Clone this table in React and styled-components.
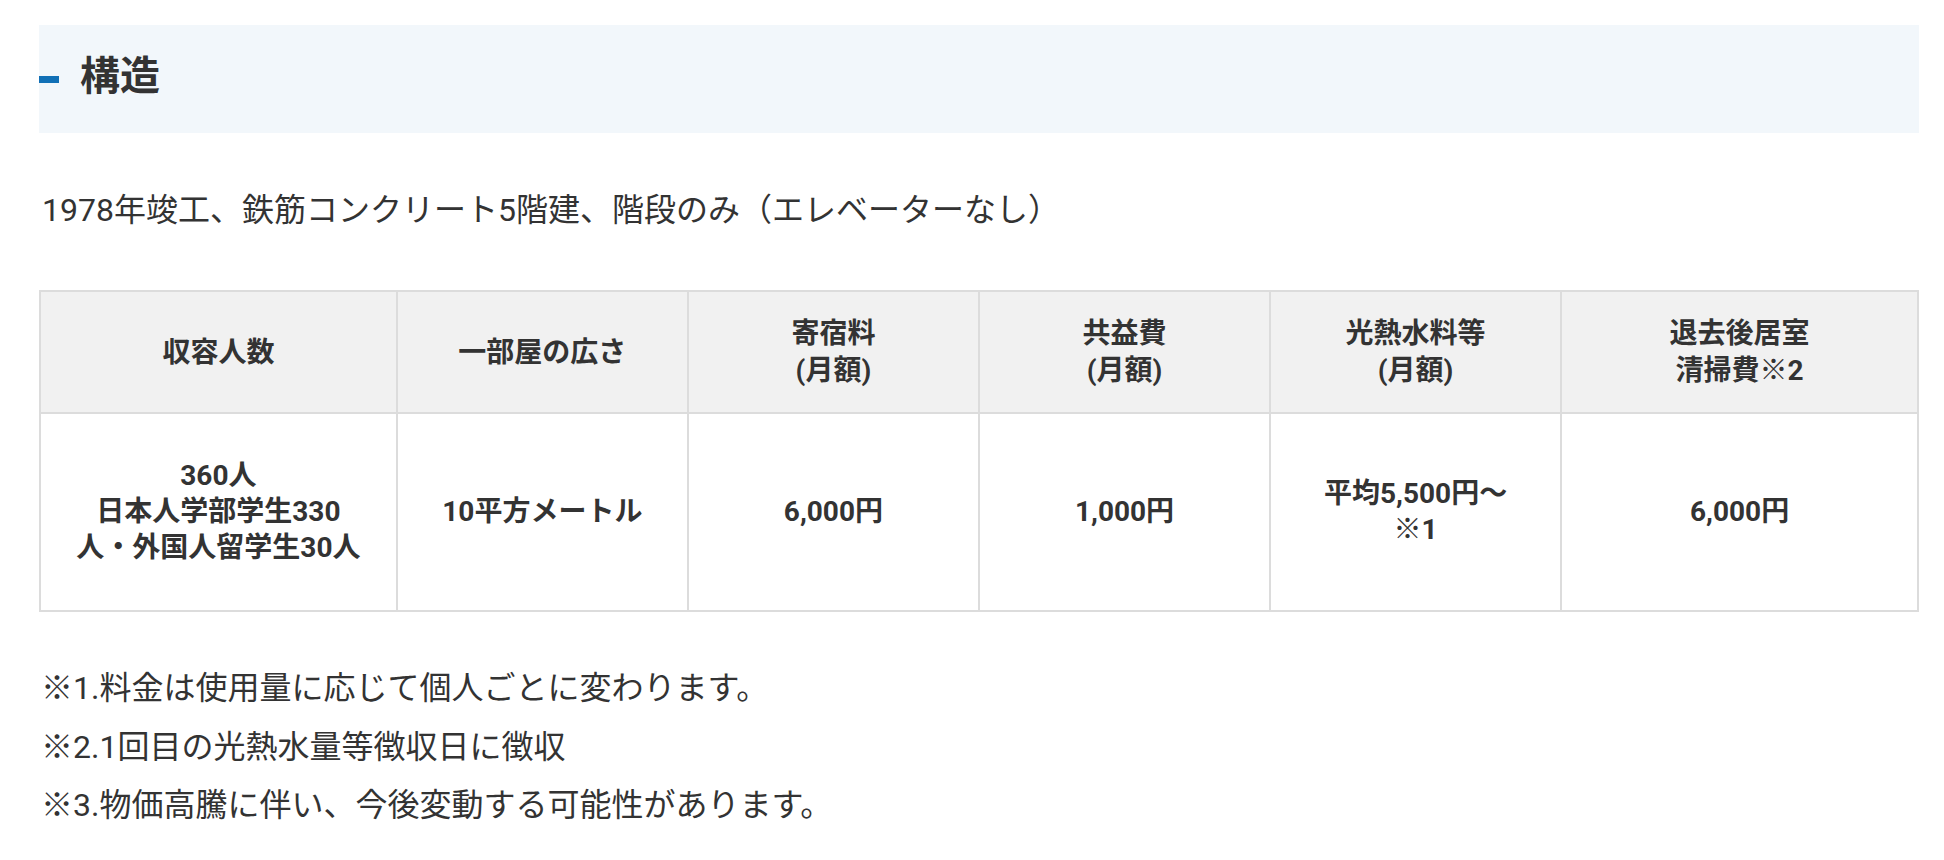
import React from 'react'
import styled, { createGlobalStyle } from 'styled-components'

const GlobalStyle = createGlobalStyle`
  body {
    margin: 0;
    background: #fff;
    color: #333;
    font-family: Roboto, "Noto Sans CJK JP", sans-serif;
  }
`

const columns = [
  { label: ['収容人数'], value: ['360人', '日本人学部学生330', '人・外国人留学生30人'], wide: true },
  { label: ['一部屋の広さ'], value: ['10平方メートル'] },
  { label: ['寄宿料', '(月額)'], value: ['6,000円'] },
  { label: ['共益費', '(月額)'], value: ['1,000円'] },
  { label: ['光熱水料等', '(月額)'], value: ['平均5,500円〜', '※1'] },
  { label: ['退去後居室', '清掃費※2'], value: ['6,000円'], wide: true },
]

const notes = [
  '※1.料金は使用量に応じて個人ごとに変わります。',
  '※2.1回目の光熱水量等徴収日に徴収',
  '※3.物価高騰に伴い、今後変動する可能性があります。',
]

const Lines = ({ lines }) =>
  lines.map((line, i) => (
    <React.Fragment key={i}>
      {i > 0 && <br />}
      {line}
    </React.Fragment>
  ))

const App = () => {
  return (
    <Page>
      <GlobalStyle />
      <Heading>
        <Dash />
        <Title>構造</Title>
      </Heading>
      <Lead>1978年竣工、鉄筋コンクリート5階建、階段のみ（エレベーターなし）</Lead>
      <Table>
        <colgroup>
          {columns.map((c, i) => (
            <Col key={i} wide={c.wide} />
          ))}
        </colgroup>
        <thead>
          <tr>
            {columns.map((c, i) => (
              <Th key={i}>
                <Lines lines={c.label} />
              </Th>
            ))}
          </tr>
        </thead>
        <tbody>
          <tr>
            {columns.map((c, i) => (
              <Td key={i}>
                <Lines lines={c.value} />
              </Td>
            ))}
          </tr>
        </tbody>
      </Table>
      <Notes>
        {notes.map((n, i) => (
          <Note key={i}>{n}</Note>
        ))}
      </Notes>
    </Page>
  )
}

export default App

const Page = styled.div`
  padding: 25px 25px 0 39px;
`

const Heading = styled.div`
  display: flex;
  align-items: center;
  gap: 21px;
  height: 108px;
  background-color: #f2f7fb;
`

const Dash = styled.span`
  width: 20px;
  height: 7px;
  background-color: #1170b6;
`

const Title = styled.h2`
  margin: 0 0 4px 0;
  font-size: 40px;
  font-weight: 700;
  line-height: 1.2;
  color: #333;
`

const Lead = styled.p`
  margin: 52px 0 55px 3px;
  font-size: 32px;
  line-height: 50px;
  color: #333;
`

const Table = styled.table`
  width: 1880px;
  table-layout: fixed;
  border-collapse: collapse;
  border: 2px solid #dcdcdc;
`

const Col = styled.col`
  width: ${p => (p.wide ? '19%' : '15.5%')};
`

const Th = styled.th`
  padding: 23px 20px;
  border: 2px solid #dcdcdc;
  background-color: #f1f1f1;
  font-size: 28px;
  font-weight: 700;
  line-height: 37px;
  text-align: center;
  vertical-align: middle;
  color: #333;
`

const Td = styled.td`
  padding: 44px 20px;
  border: 2px solid #dcdcdc;
  background-color: #fff;
  font-size: 28px;
  font-weight: 700;
  line-height: 36px;
  text-align: center;
  vertical-align: middle;
  color: #333;
`

const Notes = styled.div`
  margin-top: 47px;
`

const Note = styled.p`
  margin: 0 0 0 2px;
  font-size: 32px;
  line-height: 58.5px;
  color: #333;
`
